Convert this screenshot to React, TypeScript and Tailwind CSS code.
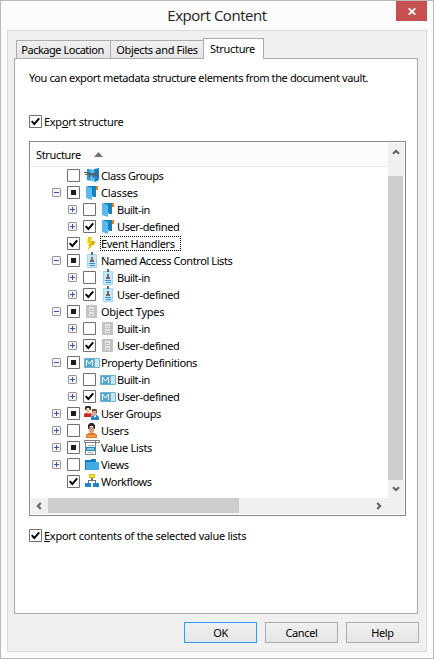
import type { ReactNode } from 'react';

type CheckState = 'on' | 'off' | 'mixed';
type IconName =
  | 'group' | 'class' | 'bolt' | 'acl' | 'object' | 'property'
  | 'users' | 'user' | 'values' | 'views' | 'workflow';

interface Item {
  label: string;
  level: 1 | 2;
  check: CheckState;
  icon: IconName;
  tracking: string;
  expander?: '+' | '-';
  focused?: boolean;
}

const builtIn = { label: 'Built-in', level: 2, check: 'off', expander: '+', tracking: 'tracking-[-0.5px]' } as const;
const userDefined = { label: 'User-defined', level: 2, check: 'on', expander: '+', tracking: 'tracking-[-0.38px]' } as const;

const items: Item[] = [
  { label: 'Class Groups', level: 1, check: 'off', icon: 'group', tracking: 'tracking-[-0.4px]' },
  { label: 'Classes', level: 1, check: 'mixed', icon: 'class', expander: '-', tracking: 'tracking-[-0.15px]' },
  { ...builtIn, icon: 'class' },
  { ...userDefined, icon: 'class' },
  { label: 'Event Handlers', level: 1, check: 'on', icon: 'bolt', focused: true, tracking: 'tracking-[-0.32px]' },
  { label: 'Named Access Control Lists', level: 1, check: 'mixed', icon: 'acl', expander: '-', tracking: 'tracking-[-0.41px]' },
  { ...builtIn, icon: 'acl' },
  { ...userDefined, icon: 'acl' },
  { label: 'Object Types', level: 1, check: 'mixed', icon: 'object', expander: '-', tracking: 'tracking-[-0.25px]' },
  { ...builtIn, icon: 'object' },
  { ...userDefined, icon: 'object' },
  { label: 'Property Definitions', level: 1, check: 'mixed', icon: 'property', expander: '-', tracking: 'tracking-[-0.38px]' },
  { ...builtIn, icon: 'property' },
  { ...userDefined, icon: 'property' },
  { label: 'User Groups', level: 1, check: 'mixed', icon: 'users', expander: '+', tracking: 'tracking-[-0.45px]' },
  { label: 'Users', level: 1, check: 'off', icon: 'user', expander: '+', tracking: 'tracking-[-0.3px]' },
  { label: 'Value Lists', level: 1, check: 'mixed', icon: 'values', expander: '+', tracking: 'tracking-[-0.3px]' },
  { label: 'Views', level: 1, check: 'off', icon: 'views', expander: '+', tracking: 'tracking-[-0.3px]' },
  { label: 'Workflows', level: 1, check: 'on', icon: 'workflow', tracking: 'tracking-[-0.38px]' },
];

const drawings: Record<IconName, ReactNode> = {
  group: (
    <>
      <path d="M3 1h4v12l-4-1z" fill="#2f9ad4" />
      <path d="M6 1l5 1v12l-5-2z" fill="#5bb9ee" />
      <path d="M10 1l5-1v12l-4 2z" fill="#1b83bd" />
      <path d="M0 4.500h4l4 1.500 7-1.500M1 6.500h7l7 1.500M8 6l2 3.500M7 6l-2 3" stroke="#4d555a" strokeWidth="1.200" fill="none" />
    </>
  ),
  class: (
    <>
      <path d="M3 1h9v11H9z" fill="#1482be" />
      <path d="M2 1l6 2v12l-6-2z" fill="#5bb9ee" />
      <path d="M12 1h2v4h-2z" fill="#e87b1c" />
    </>
  ),
  bolt: (
    <>
      <path d="M4 1h4L7 5h4l-1 4H8l-4 6 1-5H4l1-3H3z" fill="#e8cd15" />
      <path d="M8 5h3l-1 4H8l-4 6 3-7z" fill="#cfb00c" />
    </>
  ),
  acl: (
    <>
      <path d="M3.500 1.500h9v13h-9z" fill="#c5e7fa" stroke="#a3d4f0" />
      <path d="M7 -1h2v3H7z" fill="#5e6467" />
      <path d="M7 4h2v3h1v2H6V7h1z" fill="#7b675c" />
      <path d="M5 10h6v1H5zM6 12h5v1H6z" fill="#3c8fd0" />
    </>
  ),
  object: (
    <>
      <path d="M2 1h11v13H2z" fill="#c2c2c2" />
      <path d="M5 3h5v4H5zM5 8h5v4H5z" fill="#e6e6e6" />
      <path d="M6 5h3v1H6zM6 10h3v1H6z" fill="#b0b0b0" />
    </>
  ),
  property: (
    <>
      <path d="M.5 3.500h15v9H.5z" fill="#c3e8fd" stroke="#72b2d2" />
      <path d="M1 4h9v8H1z" fill="#55a6cc" />
      <path d="M2.500 11V5l3 4 3-4v6" stroke="#fff" fill="none" />
      <path d="M10 4h1v8h-1z" fill="#72b2d2" />
    </>
  ),
  users: (
    <>
      <path d="M7 14v-3l2-2h4l2 2v3z" fill="#2c86c4" />
      <path d="M10 9h2v2h-2z" fill="#fff" />
      <path d="M8 5h5v3l-2 2h-1L8 8z" fill="#dda58a" />
      <path d="M8 3h4l1 1v3h-1V5H9v1H8z" fill="#774b37" />
      <path d="M0 11V8l2-1h4l2 1-1 3z" fill="#d4202a" />
      <path d="M2 3h4v3L5 8H4L2 6z" fill="#f4c9a4" />
      <path d="M2 0h4l1 1v3H6L5 2H3L2 4H1V1z" fill="#332d2d" />
    </>
  ),
  user: (
    <>
      <path d="M2 15v-3l2-2h7l2 2v3z" fill="#e87722" />
      <path d="M3 12h9v2H3z" fill="#f29b58" />
      <path d="M5 4h5v4l-1 2H6L5 8z" fill="#d39b7c" />
      <path d="M4 2l2-2h3l2 2v4h-1L9 3H6L5 6H4z" fill="#302b2b" />
    </>
  ),
  values: (
    <>
      <path d="M1.500 2.500h10v12h-10z" fill="#fff" stroke="#808080" />
      <path d="M.5.500h15v2H.5z" fill="#fff" stroke="#808080" />
      <path d="M11 0h1v3h-1z" fill="#808080" />
      <path d="M4 5h6v1H4zM4 12h5v1H4z" fill="#aaa" />
      <path d="M2 7h9v4H2z" fill="#1589c9" />
      <path d="M3 8.500h7v1H3z" fill="#fff" />
    </>
  ),
  views: (
    <>
      <path d="M1 3h6V2h5v3h3v8H1z" fill="#0f7dbb" />
      <path d="M2 5h13v8H2z" fill="#40abe5" />
    </>
  ),
  workflow: (
    <>
      <path d="M7 4h2v2h3v3h-1V7H5v2H4V6h3z" fill="#6c7073" />
      <path d="M5.500.500h5v3h-5z" fill="#f5e51c" stroke="#cdb90d" />
      <path d="M1 9h6v4H1zM9 9h6v4H9z" fill="#1488ca" />
    </>
  ),
};

function CheckBox({ state }: { state: CheckState }) {
  return (
    <svg className="block size-[13px] shrink-0" viewBox="0 0 13 13">
      <path d="M.5.500h12v12H.5z" fill="#fff" stroke="#707070" />
      {state === 'mixed' && <path d="M4 4h5v5H4z" fill="#1c1c1c" />}
      {state === 'on' && <path d="M2.700 6.200l2.600 2.900L10.200 3.300" fill="none" stroke="#000" strokeWidth="2" />}
    </svg>
  );
}

function Expander({ sign }: { sign?: '+' | '-' }) {
  return (
    <svg className="block size-[9px] shrink-0" viewBox="0 0 9 9">
      {sign && (
        <>
          <rect x=".5" y=".5" width="8" height="8" rx=".6" fill="#f4f4f4" stroke="#949494" />
          <path d={sign === '+' ? 'M2 4h5v1H2zM4 2h1v5H4z' : 'M2 4h5v1H2z'} fill="#3a53a4" />
        </>
      )}
    </svg>
  );
}

function Row({ item }: { item: Item }) {
  return (
    <div className={`flex h-[17px] items-start ${item.level === 1 ? 'pl-[21px]' : 'pl-[37px]'}`}>
      <div className="mt-1"><Expander sign={item.expander} /></div>
      <div className="ml-1.5 mt-0.5"><CheckBox state={item.check} /></div>
      <svg className="ml-1 mt-px block size-4 shrink-0 overflow-visible" viewBox="0 0 16 16">{drawings[item.icon]}</svg>
      <span
        className={`mt-px flex h-[15px] items-center whitespace-pre pl-px ${item.tracking} ${item.focused ? 'w-[81px] outline-1 -outline-offset-1 outline-dotted outline-black' : ''}`}
      >
        {item.label}
      </span>
    </div>
  );
}

function Chevron({ className }: { className: string }) {
  return (
    <svg className={`block h-[6px] w-2 ${className}`} viewBox="0 0 8 6">
      <path d="M1 4.800l3-3 3 3" fill="none" stroke="#606060" strokeWidth="2" />
    </svg>
  );
}

function Button({ children, primary }: { children: string; primary?: boolean }) {
  return (
    <button
      className={`h-[21px] w-[73px] border bg-linear-to-b from-[#f0f0f0] to-[#e5e5e5] tracking-[-0.35px] ${primary ? 'border-[#3399ff]' : 'border-[#acacac]'}`}
    >
      {children}
    </button>
  );
}

export default function App() {
  return (
    <div className="flex h-[659px] w-[434px] flex-col border border-[#b9b9b9] bg-[#fcfcfc] font-['Noto_Sans',sans-serif] text-[11px] leading-[15px] text-black">
      <header className="flex h-[29px] shrink-0 pl-[37px] pr-[6px]">
        <h1 className="flex-1 pt-[2px] text-center font-['Open_Sans',sans-serif] text-[15px] leading-6 tracking-[-0.45px] text-[#222]">Export Content</h1>
        <button className="flex h-5 w-[31px] items-center justify-center bg-[#c75050]">
          <svg className="block h-[7px] w-2" viewBox="0 0 8 7">
            <path d="M.7.300l6.600 6.400M7.300.300L.7 6.700" stroke="#fff" strokeWidth="1.700" />
          </svg>
        </button>
      </header>
      <main className="mx-[6px] mb-[6px] flex min-h-0 flex-1 flex-col border border-[#d8d8d8] bg-[#f0f0f0] pl-[6px] pr-[8px]">
        <nav className="z-10 -mb-px mt-[7px] flex h-[21px] shrink-0 items-end pl-[2px]">
          <div className="mb-px flex h-[18px] w-[95px] items-center justify-center border border-b-0 border-[#acacac] bg-linear-to-b from-[#f0f0f0] to-[#e5e5e5] pr-0.5 tracking-[-0.48px]">Package Location</div>
          <div className="-ml-px mb-px flex h-[18px] w-[94px] items-center justify-center border border-b-0 border-[#acacac] bg-linear-to-b from-[#f0f0f0] to-[#e5e5e5] tracking-[-0.33px]">Objects and Files</div>
          <div className="-ml-px flex h-[21px] w-[61px] items-center justify-center border border-b-0 border-[#acacac] bg-white pb-0.5 pr-0.5 tracking-[-0.33px]">Structure</div>
        </nav>
        <section className="h-[556px] shrink-0 border border-[#acacac] bg-white px-[14px]">
          <p className="mt-[11px] whitespace-pre tracking-[-0.38px]">You can export metadata structure elements from the document vault.</p>
          <div className="mt-[30px] flex h-[13px] items-center gap-0.5">
            <CheckBox state="on" />
            <span className="whitespace-pre tracking-[-0.28px]">Exp<u className="underline-offset-1">o</u>rt structure</span>
          </div>
          <div className="mt-[13px] flex h-[375px] w-[377px] flex-col border border-[#828790] p-px">
            <div className="flex h-[355px]">
              <div className="flex-1">
                <div className="flex h-6 items-center border-b border-[#e5eefa] bg-[#fcfcfc] pl-[5px]">
                  <span className="w-[49px] tracking-[-0.33px]">Structure</span>
                  <svg className="ml-[9px] block h-[5px] w-[9px]" viewBox="0 0 9 5"><path d="M4.500 0L9 5H0z" fill="#727272" /></svg>
                </div>
                {items.map((item, i) => <Row key={i} item={item} />)}
              </div>
              <div className="flex w-4 flex-col items-center bg-[#f0f0f0]">
                <Chevron className="mt-[6px]" />
                <div className="mt-[21px] h-[304px] w-[15px] self-start bg-[#cdcdcd]" />
                <Chevron className="mt-[6px] rotate-180" />
              </div>
            </div>
            <div className="flex h-4 items-center bg-[#f0f0f0]">
              <Chevron className="ml-1 -rotate-90" />
              <div className="ml-[5px] h-[15px] w-[191px] self-start bg-[#cdcdcd]" />
              <Chevron className="ml-[136px] rotate-90" />
            </div>
          </div>
          <div className="mt-[13px] flex h-[13px] items-center gap-0.5">
            <CheckBox state="on" />
            <span className="whitespace-pre tracking-[-0.27px]"><u className="underline-offset-1">E</u>xport contents of the selected value lists</span>
          </div>
        </section>
        <footer className="-mr-px mt-2 flex justify-end gap-2">
          <Button primary>OK</Button>
          <Button>Cancel</Button>
          <Button>Help</Button>
        </footer>
      </main>
    </div>
  );
}
